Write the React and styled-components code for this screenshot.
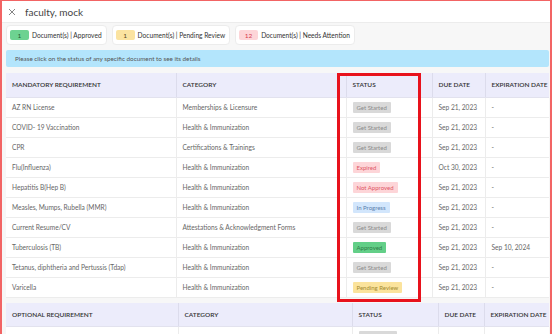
import React from 'react'
import styled, { createGlobalStyle } from 'styled-components'

const GlobalStyle = createGlobalStyle`
html, body {
  margin: 0;
  padding: 0;
  background: #fff;
}
* {
  box-sizing: border-box;
}
`

const Frame = styled.div`
position: relative;
width: 552px;
height: 334px;
overflow: hidden;
border-left: 2px solid #f26464;
border-top: 1px solid #f26464;
border-right: 2px solid #f26464;
font-family: 'Lato', 'Liberation Sans', sans-serif;
background: #f7f7f7;
`

const TopBar = styled.div`
height: 22px;
background: #fff;
border-bottom: 1px solid #ececec;
display: flex;
align-items: center;
gap: 9px;
padding-left: 6px;
color: #444;
font-size: 10px;
`

const Body = styled.div`
padding: 2px 1px 0 4px;
`

const Summary = styled.div`
display: flex;
gap: 5px;
`

const Card = styled.div`
height: 20px;
background: #fff;
border: 1px solid #ececec;
border-radius: 4px;
display: flex;
align-items: center;
gap: 3px;
padding: 0 4px 0 3px;
font-size: 6.6px;
color: #333;
`

const Count = styled.span`
display: inline-flex;
justify-content: center;
align-items: center;
width: 19px;
height: 10px;
border-radius: 2px;
background: ${p => p.bg};
color: ${p => p.fg};
font-size: 6.5px;
`

const Banner = styled.div`
margin-top: 5px;
height: 17px;
background: #b3e5fc;
border-radius: 2px;
display: flex;
align-items: center;
padding-left: 9px;
font-size: 6.3px;
color: #555;
`

const TableWrap = styled.div`
position: relative;
margin-top: ${p => p.gap}px;
background: #fff;
`

const Table = styled.table`
width: 543px;
table-layout: fixed;
border-collapse: collapse;
`

const Th = styled.th`
height: 24px;
background: #ececfb;
border-right: 1px solid #dcdcec;
border-bottom: 1px solid #e2e2ee;
text-align: left;
padding: 0 6px;
font-size: 6.5px;
font-weight: 600;
color: #333;
white-space: nowrap;
overflow: hidden;
&:last-child { border-right: none; }
`

const Td = styled.td`
height: 20px;
border-right: 1px solid #ececec;
border-bottom: 1px solid #ececec;
padding: 0 6px;
font-size: 6.6px;
color: #666;
white-space: nowrap;
overflow: hidden;
&:last-child { border-right: none; }
`

const statusColors = {
  'Get Started': ['#d9d9d9', '#8a8a8a'],
  'Expired': ['#fdd5d8', '#e05566'],
  'Not Approved': ['#fdd5d8', '#e05566'],
  'In Progress': ['#d2e6fc', '#5b7fae'],
  'Approved': ['#63cf88', '#2f7a47'],
  'Pending Review': ['#fbe39c', '#a38a30'],
}

const Status = styled.span`
display: inline-flex;
align-items: center;
height: 11px;
padding: 0 4px;
border-radius: 1px;
font-size: 6px;
background: ${p => statusColors[p.label][0]};
color: ${p => statusColors[p.label][1]};
`

const Highlight = styled.div`
position: absolute;
left: 331px;
top: 0;
width: 84px;
height: 229px;
border: 3px solid #e8121c;
pointer-events: none;
`

const mandatory = [
  ['AZ RN License', 'Memberships & Licensure', 'Get Started', 'Sep 21, 2023', '-'],
  ['COVID- 19 Vaccination', 'Health & Immunization', 'Get Started', 'Sep 21, 2023', '-'],
  ['CPR', 'Certifications & Trainings', 'Get Started', 'Sep 21, 2023', '-'],
  ['Flu(Influenza)', 'Health & Immunization', 'Expired', 'Oct 30, 2023', '-'],
  ['Hepatitis B(Hep B)', 'Health & Immunization', 'Not Approved', 'Sep 21, 2023', '-'],
  ['Measles, Mumps, Rubella (MMR)', 'Health & Immunization', 'In Progress', 'Sep 21, 2023', '-'],
  ['Current Resume/CV', 'Attestations & Acknowledgment Forms', 'Get Started', 'Sep 21, 2023', '-'],
  ['Tuberculosis (TB)', 'Health & Immunization', 'Approved', 'Sep 21, 2023', 'Sep 10, 2024'],
  ['Tetanus, diphtheria and Pertussis (Tdap)', 'Health & Immunization', 'Get Started', 'Sep 21, 2023', '-'],
  ['Varicella', 'Health & Immunization', 'Pending Review', 'Sep 21, 2023', '-'],
]

const optional = [
  ['', '', 'Get Started', '', ''],
]

const CloseIcon = () => (
  <svg width="8" height="8" viewBox="0 0 8 8">
    <path d="M1 1L7 7M7 1L1 7" stroke="#777" strokeWidth="0.9" fill="none" />
  </svg>
)

const ReqTable = ({ title, rows, widths }) => (
  <Table>
    <colgroup>
      {widths.map((w, i) => <col key={i} style={{ width: w }} />)}
    </colgroup>
    <thead>
      <tr>
        <Th>{title}</Th>
        <Th>CATEGORY</Th>
        <Th>STATUS</Th>
        <Th>DUE DATE</Th>
        <Th>EXPIRATION DATE</Th>
      </tr>
    </thead>
    <tbody>
      {rows.map((r, i) => (
        <tr key={i}>
          <Td>{r[0]}</Td>
          <Td>{r[1]}</Td>
          <Td><Status label={r[2]}>{r[2]}</Status></Td>
          <Td>{r[3]}</Td>
          <Td>{r[4]}</Td>
        </tr>
      ))}
    </tbody>
  </Table>
)

export default function App() {
  return (
    <Frame>
      <GlobalStyle />
      <TopBar>
        <CloseIcon />
        <span>faculty, mock</span>
      </TopBar>
      <Body>
        <Summary>
          <Card><Count bg="#6dd291" fg="#1f5e35">1</Count>Document(s) | Approved</Card>
          <Card><Count bg="#fbe3a0" fg="#5a4a1a">1</Count>Document(s) | Pending Review</Card>
          <Card><Count bg="#fdd5d8" fg="#d83a4c">12</Count>Document(s) | Needs Attention</Card>
        </Summary>
        <Banner>Please click on the status of any specific document to see its details</Banner>
        <TableWrap gap={6}>
          <ReqTable title="MANDATORY REQUIREMENT" rows={mandatory} widths={[170, 170, 86, 53, 64]} />
          <Highlight />
        </TableWrap>
        <TableWrap gap={5}>
          <ReqTable title="OPTIONAL REQUIREMENT" rows={optional} widths={[172, 174, 86, 46, 65]} />
        </TableWrap>
      </Body>
    </Frame>
  )
}
